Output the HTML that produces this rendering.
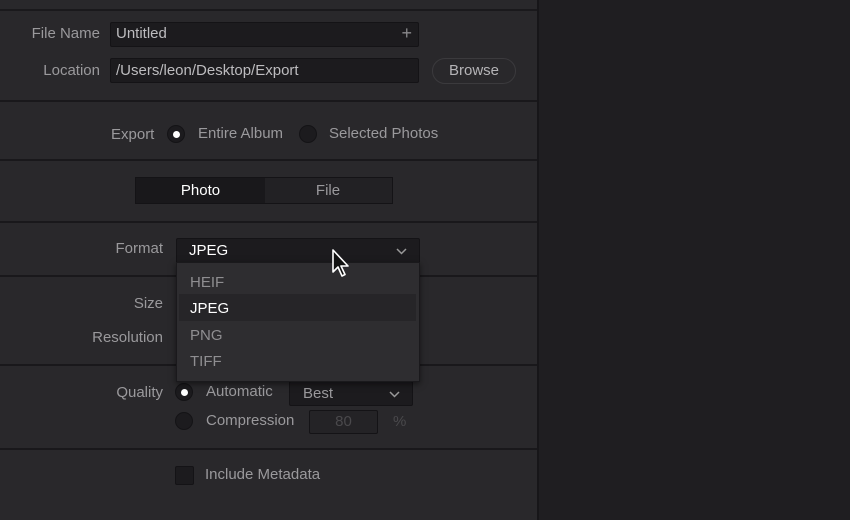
<!DOCTYPE html><html><head><style>
body{margin:0;width:850px;height:520px;background:#1f1e21;font-family:"Liberation Sans",sans-serif;font-size:15px;color:#9a999c;position:relative;overflow:hidden}
.p{position:absolute;left:0;top:0;width:537px;height:520px;background:#29282b;border-right:2px solid #171619}
.a{position:absolute}
.hl{position:absolute;left:0;width:537px;height:2px;background:#19181b}
.in{position:absolute;background:#1c1b1e;border:1px solid #141316;border-radius:2px;color:#bdbcbf}
.r{text-align:right}
.rad{position:absolute;width:16px;height:16px;border-radius:50%;background:#1c1b1e;border:1px solid #141316}
.dot{position:absolute;left:5px;top:5px;width:7px;height:7px;border-radius:50%;background:#fff}
</style></head><body>
<div class="p">
<div class="hl" style="top:9px;background:#1a191c"></div>
<div class="a r" style="left:0;width:100px;top:25px">File Name</div>
<div class="in" style="left:110px;top:22px;width:307px;height:23px"><span class="a" style="left:5px;top:2px">Untitled</span><span class="a" style="right:6px;top:0;font-size:18px;color:#8a898c">+</span></div>
<div class="a r" style="left:0;width:100px;top:62px">Location</div>
<div class="in" style="left:110px;top:58px;width:307px;height:23px"><span class="a" style="left:5px;top:3px">/Users/leon/Desktop/Export</span></div>
<div class="a" style="left:432px;top:58px;width:82px;height:24px;border:1px solid #3b3a3d;border-radius:13px;text-align:center;line-height:24px;color:#b5b4b7">Browse</div>
<div class="hl" style="top:100px"></div>
<div class="a" style="left:111px;top:126px">Export</div>
<div class="rad" style="left:167px;top:125px"><div class="dot"></div></div>
<div class="a" style="left:198px;top:125px">Entire Album</div>
<div class="rad" style="left:299px;top:125px"></div>
<div class="a" style="left:329px;top:125px">Selected Photos</div>
<div class="hl" style="top:159px"></div>
<div class="a" style="left:135px;top:177px;width:256px;height:25px;background:#222124;border:1px solid #141316"></div>
<div class="a" style="left:136px;top:178px;width:129px;height:25px;background:#19181b;color:#fff;text-align:center;line-height:25px">Photo</div>
<div class="a" style="left:265px;top:178px;width:126px;height:25px;text-align:center;line-height:25px">File</div>
<div class="hl" style="top:221px"></div>
<div class="a r" style="left:0;width:163px;top:240px">Format</div>
<div class="in" style="left:176px;top:238px;width:242px;height:24px;color:#fff"><span class="a" style="left:12px;top:3px">JPEG</span>
<svg class="a" style="right:12px;top:9px" width="11" height="7"><path d="M1 1l4.5 4.5L10 1" stroke="#999" fill="none" stroke-width="1.5"/></svg></div>
<div class="hl" style="top:275px"></div>
<div class="a r" style="left:0;width:163px;top:295px">Size</div>
<div class="a r" style="left:0;width:163px;top:329px">Resolution</div>
<div class="hl" style="top:364px"></div>
<div class="a r" style="left:0;width:163px;top:384px">Quality</div>
<div class="rad" style="left:175px;top:383px"><div class="dot"></div></div>
<div class="a" style="left:206px;top:383px">Automatic</div>
<div class="in" style="left:289px;top:381px;width:122px;height:23px"><span class="a" style="left:13px;top:3px;color:#9a999c">Best</span>
<svg class="a" style="right:12px;top:9px" width="11" height="7"><path d="M1 1l4.5 4.5L10 1" stroke="#999" fill="none" stroke-width="1.5"/></svg></div>
<div class="rad" style="left:175px;top:412px"></div>
<div class="a" style="left:206px;top:412px">Compression</div>
<div class="in" style="left:309px;top:410px;width:67px;height:22px;background:#242326;color:#4a494c;text-align:center;line-height:22px">80</div>
<div class="a" style="left:393px;top:413px;color:#4a494c">%</div>
<div class="hl" style="top:448px"></div>
<div class="a" style="left:175px;top:466px;width:17px;height:17px;background:#1c1b1e;border:1px solid #141316;border-radius:2px"></div>
<div class="a" style="left:205px;top:466px">Include Metadata</div>
<div class="a" style="left:176px;top:262px;width:242px;height:118px;background:#2e2d30;border:1px solid #1a191c;box-shadow:0 2px 6px rgba(0,0,0,.5)">
<div class="a" style="left:2px;top:31px;width:237px;height:27px;background:#262528"></div>
<div class="a" style="left:13px;top:11px;color:#8f8e91">HEIF</div>
<div class="a" style="left:13px;top:37px;color:#fff">JPEG</div>
<div class="a" style="left:13px;top:64px;color:#8f8e91">PNG</div>
<div class="a" style="left:13px;top:90px;color:#8f8e91">TIFF</div>
</div>
<svg class="a" style="left:331px;top:249px" width="22" height="32"><path d="M2 1v22l5-5 4 9 3-1.5-4-8.5h7z" fill="#111" stroke="#fff" stroke-width="1.6" stroke-linejoin="round"/></svg>
</div>
</body></html>
